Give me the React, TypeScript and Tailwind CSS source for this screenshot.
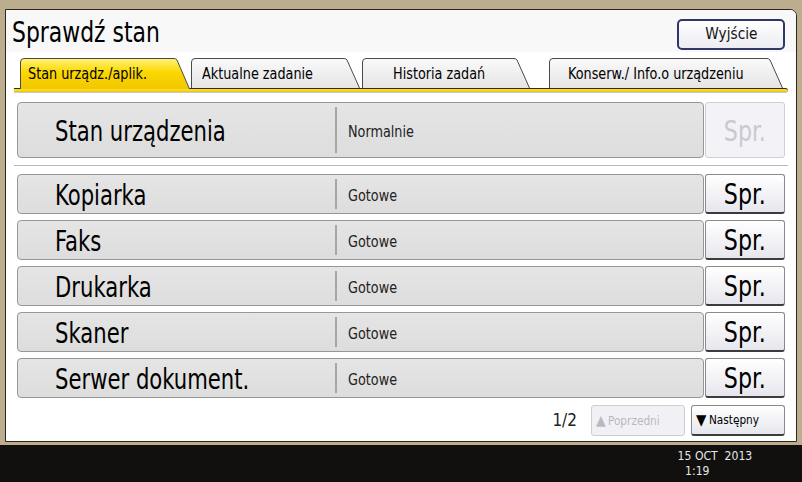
import React from 'react'

type Tab = { label: string; w: string; ml: string; pl: string; width: number; active?: boolean }

const tabs: Tab[] = [
  { label: 'Stan urządz./aplik.', w: 'w-[170px]', ml: 'ml-0', pl: 'pl-[8px]', width: 170, active: true },
  { label: 'Aktualne zadanie', w: 'w-[169px]', ml: 'ml-[1px]', pl: 'pl-[11px]', width: 169 },
  { label: 'Historia zadań', w: 'w-[168px]', ml: 'ml-[2px]', pl: 'pl-[31px]', width: 168 },
  { label: 'Konserw./ Info.o urządzeniu', w: 'w-[234px]', ml: 'ml-[19px]', pl: 'pl-[19px]', width: 234 },
]

const rows = [
  { name: 'Kopiarka', state: 'Gotowe' },
  { name: 'Faks', state: 'Gotowe' },
  { name: 'Drukarka', state: 'Gotowe' },
  { name: 'Skaner', state: 'Gotowe' },
  { name: 'Serwer dokument.', state: 'Gotowe' },
]

const TabShape = ({ width, active }: { width: number; active?: boolean }) => {
  const h = active ? 31 : 30
  const d = `M0.5,${h} L0.5,4 Q0.5,0.5 4,0.5 L${width - 16},0.5 Q${width - 14},0.5 ${width - 13},2 L${width - 0.5},${h}`
  const id = active ? 'tabOn' : 'tabOff'
  return (
    <svg className="absolute inset-0" width={width} height={h}>
      <defs>
        <linearGradient id={id} x1="0" y1="0" x2="0" y2="1">
          {active ? (
            <>
              <stop offset="0" stopColor="#fff27a" />
              <stop offset="0.45" stopColor="#fbd800" />
              <stop offset="1" stopColor="#f2c600" />
            </>
          ) : (
            <>
              <stop offset="0" stopColor="#fafafa" />
              <stop offset="1" stopColor="#e4e4e4" />
            </>
          )}
        </linearGradient>
      </defs>
      <path d={d + ' Z'} fill={`url(#${id})`} stroke="none" />
      <path d={d} fill="none" stroke="#4a4a4a" strokeWidth="1" />
    </svg>
  )
}

const SprButton = ({ disabled }: { disabled?: boolean }) => (
  <div
    className={
      disabled
        ? 'w-[80px] h-full ml-[1px] flex items-center justify-center rounded-[3px] border border-[#cfcfd6] bg-[#f3f3f7] text-[#c9c9d2] text-[28px] leading-none'
        : 'w-[80px] h-full ml-[1px] flex items-center justify-center rounded-[3px] border border-[#8a8a8a] border-b-2 border-b-[#3c3c3c] bg-gradient-to-b from-white to-[#e6e6ee] text-black text-[28px] leading-none'
    }
  >
    <span className="inline-block scale-x-[0.88] pt-[3px]">Spr.</span>
  </div>
)

const Row = ({ name, state, big, disabled }: { name: string; state: string; big?: boolean; disabled?: boolean }) => (
  <div className={big ? 'flex h-[56px]' : 'flex h-[40px]'}>
    <div className="flex-1 flex items-center rounded-[4px] border border-[#979797] bg-gradient-to-b from-[#e5e5e5] to-[#dddddd]">
      <div className="w-[317px] pl-[37px] pt-[4px] text-[28px] leading-none text-black whitespace-nowrap">
        <span className="inline-block origin-left scale-x-[0.84]">{name}</span>
      </div>
      <div className="self-stretch my-[4px] border-l-2 border-[#a6a6a6]" />
      <div className="pl-[11px] text-[15px] text-[#222] pt-[5px]">
        <span className="inline-block origin-left scale-x-[0.95]">{state}</span>
      </div>
    </div>
    <SprButton disabled={disabled} />
  </div>
)

export default function App() {
  return (
    <div className="w-[802px] h-[482px] flex flex-col bg-[#12100e] font-['DejaVu_Sans_Condensed','DejaVu_Sans',sans-serif] overflow-hidden">
      <div className="h-[445px] bg-[#bcad8e] pt-[9px] pb-[3px] px-[5px]">
        <div className="h-full flex flex-col bg-white border border-[#2b261c] rounded-tr-[7px] overflow-hidden">
          {/* header */}
          <div className="h-[42px] flex items-center justify-between bg-[#f8f8f8] pl-[6px] pr-[11px]">
            <div className="text-[28px] leading-none text-black pt-[3px] whitespace-nowrap">
              <span className="inline-block origin-left scale-x-[0.87]">Sprawdź stan</span>
            </div>
            <div className="w-[108px] h-[31px] mt-[6px] flex items-center justify-center rounded-[5px] border-2 border-[#2e3768] bg-gradient-to-b from-white to-[#ececf2] text-[16px] text-[#111]">
              <span className="inline-block scale-x-[0.95]">Wyjście</span>
            </div>
          </div>

          {/* tabs */}
          <div className="mt-[6px] h-[30px] flex items-start pl-[14px] relative z-10">
            {tabs.map(t => (
              <div
                key={t.label}
                className={`relative ${t.w} ${t.ml} ${t.active ? 'h-[31px]' : 'h-[30px]'} flex items-center ${t.pl} text-[15px] leading-none text-black whitespace-nowrap`}
              >
                <TabShape width={t.width} active={t.active} />
                <span className="relative inline-block origin-left scale-x-[0.95] pt-[2px]">{t.label}</span>
              </div>
            ))}
          </div>
          <div className="mx-[8px] h-[5px] border-t border-[#2a2a2a] bg-gradient-to-b from-[#ffe22a] to-[#f0c400] rounded-r-[3px] border-b border-b-[#c9c9c9]" />

          {/* device state */}
          <div className="mt-[9px] px-[11px]">
            <Row name="Stan urządzenia" state="Normalnie" big disabled />
          </div>
          <div className="mt-[7px] mx-[8px] h-[2px] bg-[#b9b9b9] border-b border-white" />

          {/* functions */}
          <div className="mt-[7px] px-[11px] flex flex-col gap-[6px]">
            {rows.map(r => (
              <Row key={r.name} name={r.name} state={r.state} />
            ))}
          </div>

          {/* pager */}
          <div className="mt-[7px] h-[31px] flex items-center justify-end pr-[11px]">
            <div className="text-[17px] text-[#222] mr-[14px]">1/2</div>
            <div className="w-[94px] h-full flex items-center pl-[4px] rounded-[3px] border border-[#cdcdd5] bg-[#f1f1f5] text-[13px] text-[#b9b9c2] whitespace-nowrap">
              <span className="text-[14px] mr-[2px]">▲</span>
              <span className="inline-block origin-left scale-x-[0.9]">Poprzedni</span>
            </div>
            <div className="w-[94px] h-full ml-[6px] flex items-center pl-[4px] rounded-[3px] border border-[#8a8a8a] border-b-2 border-b-[#3c3c3c] bg-gradient-to-b from-white to-[#e6e6ee] text-[13px] text-black whitespace-nowrap">
              <span className="text-[15px] mr-[3px]">▼</span>
              <span className="inline-block origin-left scale-x-[0.9]">Następny</span>
            </div>
          </div>
        </div>
      </div>

      {/* status bar */}
      <div className="flex-1 flex justify-end pr-[50px] pt-[3px]">
        <div className="flex flex-col text-[13px] leading-[15px] text-[#e8e8e8] whitespace-pre origin-right scale-x-[0.93]">
          <span>15 OCT  2013</span>
          <span className="pl-[8px]">1:19</span>
        </div>
      </div>
    </div>
  )
}
